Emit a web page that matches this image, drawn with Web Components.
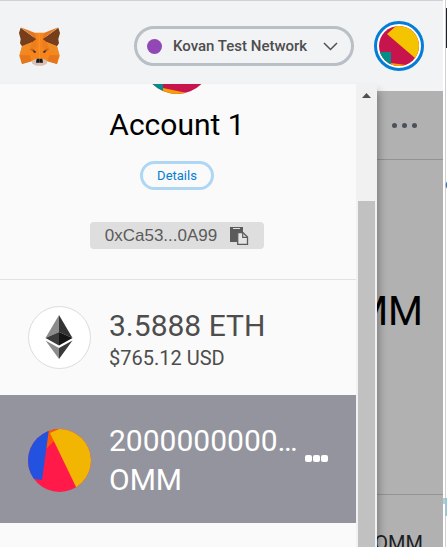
<!DOCTYPE html>
<html lang="en">
<head>
<meta charset="utf-8">
<title>Wallet</title>
<style>
  html, body { height: 100%; margin: 0; }
  body { font-family: Roboto, "Liberation Sans", sans-serif; background: #fff; overflow: hidden; }
</style>
</head>
<body>
<wallet-window>
  <wallet-header slot="header">
    <fox-logo slot="logo"></fox-logo>
    <network-picker slot="network">Kovan Test Network</network-picker>
    <account-button slot="account"></account-button>
  </wallet-header>
  <token-view slot="main">
    <span slot="balance">OMM</span>
    <span slot="activity">OMM</span>
  </token-view>
  <side-drawer slot="drawer">
    <account-summary>
      <span slot="name">Account 1</span>
      <span slot="address">0xCa53...0A99</span>
    </account-summary>
    <asset-row>
      <eth-icon slot="icon"></eth-icon>
      3.5888 ETH
      <span slot="fiat">$765.12 USD</span>
    </asset-row>
    <asset-row selected>
      <token-icon slot="icon"></token-icon>
      2000000000…<br>OMM
    </asset-row>
  </side-drawer>
  <page-edge slot="edge">e</page-edge>
</wallet-window>

<script>
const define = (name, markup) => customElements.define(name, class extends HTMLElement {
  constructor() {
    super();
    const template = document.createElement('template');
    template.innerHTML = markup;
    this.attachShadow({ mode: 'open' }).append(template.content.cloneNode(true));
  }
});

define('wallet-window', `
  <style>
    :host { display: grid; grid-template-columns: minmax(0, 1fr) 4px; height: 100vh; }
    .popup { position: relative; display: flex; flex-direction: column; min-height: 0; overflow: hidden; }
    ::slotted([slot=main]) { flex: 1; }
    ::slotted([slot=drawer]) { position: absolute; top: 84px; bottom: 0; left: 0; right: 66px; }
  </style>
  <div class="popup"><slot name="header"></slot><slot name="main"></slot><slot name="drawer"></slot></div>
  <slot name="edge"></slot>`);

define('wallet-header', `
  <style>
    :host { display: block; }
    header { display: flex; align-items: center; gap: 20px; height: 90px; padding: 0 19px; background: #f2f3f5; border-top: 1px solid #d0d1d5; }
    .space { flex: 1; }
  </style>
  <header><slot name="logo"></slot><div class="space"></div><slot name="network"></slot><slot name="account"></slot></header>`);

define('fox-logo', `
  <style>:host { display: block; } svg { display: block; }</style>
  <svg width="41" height="39" viewBox="57 79 123 117" role="img" aria-label="Wallet logo">
    <defs><g id="half">
      <path fill="#f6851b" d="M104 96H119V176H108L66 190L58 166L66 137L97 124Z"/>
      <path fill="#e8761b" d="M62 80L104 96L109 116Z"/>
      <path fill="#763e1a" d="M62 81L109 116L97 125L66 137L60 128L62 115L57 97Z"/>
      <path fill="#f08a24" d="M66 137L97 124L89 145L58 165Z"/>
      <path fill="#e4761b" d="M60 164H89L96 182L66 190Z"/>
      <path fill="#cd6116" d="M89 145L97 141L109 153L105 158Z"/>
      <path fill="#ee7e1d" d="M109 116L97 125L89 145L110 143Z"/>
      <path fill="#f6851b" d="M89 164L106 158L108 176L96 182Z"/>
      <path fill="#233447" d="M98 149L107 152L106 157L101 155Z"/>
      <path fill="#d7c1b3" d="M95 181L108 174H119V195H109L97 189Z"/>
      <path fill="#161616" d="M110 174H119V186H108Z"/>
    </g></defs>
    <use href="#half"/><use href="#half" transform="translate(237 0) scale(-1 1)"/>
  </svg>`);

define('network-picker', `
  <style>
    :host { display: block; }
    button { display: flex; align-items: center; width: 220px; height: 40px; padding: 0 13px 0 10px; border: 3px solid #b8bfc5; border-radius: 20px; background: none; font: 500 15px/20px Roboto, sans-serif; color: #4d4d4d; }
    i { width: 15px; height: 15px; margin-right: 11px; border-radius: 50%; background: #9148b5; }
    span { flex: 1; text-align: left; white-space: nowrap; }
  </style>
  <button type="button"><i></i><span><slot></slot></span>
    <svg width="15" height="9" viewBox="0 0 15 9" fill="none" stroke="#4d5156" stroke-width="1.5"><path d="M1 1L7.5 7.5L14 1"/></svg>
  </button>`);

define('account-button', `
  <style>
    :host { display: block; }
    button { display: block; width: 50px; height: 50px; padding: 2px; border: 3px solid #037dd6; border-radius: 50%; background: #fff; }
    svg { display: block; border-radius: 50%; }
  </style>
  <button type="button" aria-label="My accounts"><svg width="40" height="40" viewBox="0 0 40 40">
    <path fill="#c8144c" d="M0 0H40V40H0Z"/><path fill="#f5c400" d="M17 0L8 8L36 32L44 26V0Z"/>
    <path fill="#018e8a" d="M0 26H12V40H0Z"/><path fill="#f59f00" d="M12 37L27 39L26 42H12Z"/>
  </svg></button>`);

define('token-view', `
  <style>
    :host { display: flex; flex-direction: column; min-height: 0; overflow: hidden; background: #b1b1b1; color: #000; }
    .menu, .balance, .activity { flex: none; }
    .menu { display: flex; justify-content: flex-end; align-items: center; height: 68px; padding-right: 26px; border-bottom: 1px solid #939393; }
    button { display: flex; gap: 5px; padding: 0; border: 0; background: none; }
    i { width: 5px; height: 5px; border-radius: 50%; background: #4a515b; }
    .balance { display: flex; justify-content: flex-end; align-items: center; height: 335px; box-sizing: border-box; padding: 0 20px 30px 0; border-bottom: 1px solid #939393; font-size: 40px; line-height: 48px; }
    .activity { text-align: right; padding: 36px 20px 0 0; font-size: 20px; line-height: 24px; color: #1b1e22; }
  </style>
  <div class="menu"><button type="button" aria-label="Options"><i></i><i></i><i></i></button></div>
  <div class="balance"><slot name="balance"></slot></div>
  <div class="activity"><slot name="activity"></slot></div>`);

define('side-drawer', `
  <style>
    :host { display: grid; grid-template-columns: minmax(0, 1fr) 21px; background: #fafafa; box-shadow: 2px 7px 8px rgba(0,0,0,.3); }
    .content { overflow: hidden; min-height: 0; }
    .bar { display: flex; flex-direction: column; align-items: center; background: #f1f1f1; padding-top: 9px; }
    .thumb { flex: 1; width: 17px; margin-top: 103px; background: #c1c1c1; }
  </style>
  <div class="content"><slot></slot></div>
  <div class="bar"><svg width="9" height="5" viewBox="0 0 9 5"><path fill="#505050" d="M0 5L4.500 0L9 5Z"/></svg><div class="thumb"></div></div>`);

define('account-summary', `
  <style>
    :host { display: flex; flex-direction: column; align-items: center; padding: 0 2px 30px 0; border-bottom: 1px solid #e2e2e2; }
    .avatar { display: flex; align-items: flex-end; width: 70px; height: 10px; overflow: hidden; }
    .avatar svg { flex: none; border-radius: 50%; }
    .name { margin-top: 11px; font-size: 30px; line-height: 40px; color: #000; }
    .details { height: 29px; width: 74px; margin-top: 16px; padding: 0; border: 3px solid #afd7f3; border-radius: 15px; background: none; font: 400 13px/20px Roboto, sans-serif; color: #037dd6; }
    .address { display: flex; align-items: center; gap: 13px; height: 27px; margin-top: 32px; padding: 0 15px; border: 0; border-radius: 4px; background: #dedede; font: 17px/24px "Liberation Sans", Arial, sans-serif; color: #5b5b5b; }
  </style>
  <div class="avatar"><svg width="70" height="70" viewBox="0 0 70 70">
    <path fill="#c8144c" d="M0 0H70V70H0Z"/><path fill="#f5c400" d="M29 0L14 14L63 56L77 45V0Z"/>
    <path fill="#018e8a" d="M0 46H21V70H0Z"/><path fill="#f59f00" d="M21 64L45 69L44 72H21Z"/>
  </svg></div>
  <div class="name"><slot name="name"></slot></div>
  <button class="details" type="button">Details</button>
  <button class="address" type="button"><slot name="address"></slot>
    <svg width="19" height="18" viewBox="0 0 19 18"><path fill="#5b5b5b" d="M0 0H13V5H7V15H0Z"/><path fill="#dedede" d="M3 1H10V2H3Z"/><path fill="#e4e4e4" stroke="#5b5b5b" stroke-width="1.300" d="M7.700 5.700H13L17.500 10V17.300H7.700Z"/><path fill="none" stroke="#5b5b5b" stroke-width="1.200" d="M12.700 5.700V10.300H17.500"/></svg>
  </button>`);

define('asset-row', `
  <style>
    :host { display: flex; align-items: flex-start; gap: 18px; padding: 26px 28px 23px; color: #4d4d4d; }
    :host([selected]) { align-items: center; padding-bottom: 24px; background: #94949e; color: #fff; }
    .text { flex: 1; min-width: 0; font-size: 30px; line-height: 39px; white-space: nowrap; }
    .fiat { font-size: 20px; line-height: 27px; }
    button { display: none; gap: 1px; padding: 0 0 4px; border: 0; background: none; }
    :host([selected]) button { display: flex; }
    :host([selected]) .fiat { display: none; }
    i { width: 7px; height: 7px; border-radius: 2px; background: #fff; }
  </style>
  <slot name="icon"></slot>
  <div class="text"><slot></slot><div class="fiat"><slot name="fiat"></slot></div></div>
  <button type="button" aria-label="Token options"><i></i><i></i><i></i></button>`);

define('eth-icon', `
  <style>:host { display: block; } svg { display: block; }</style>
  <svg width="63" height="63" viewBox="0 0 63 63"><circle cx="31.500" cy="31.500" r="31" fill="#fff" stroke="#dcdcdc"/>
    <path fill="#8c8c8c" d="M31 9L17.500 32L31 26Z"/><path fill="#343434" d="M31 9L44.500 32L31 26Z"/>
    <path fill="#3c3c3b" d="M31 26L17.500 32L31 39.500Z"/><path fill="#141414" d="M31 26L44.500 32L31 39.500Z"/>
    <path fill="#8c8c8c" d="M17.500 34.500L31 42V53Z"/><path fill="#393939" d="M44.500 34.500L31 42V53Z"/>
  </svg>`);

define('token-icon', `
  <style>:host { display: block; } svg { display: block; border-radius: 50%; }</style>
  <svg width="63" height="63" viewBox="0 0 63 63"><path fill="#ff1a49" d="M0 0H63V63H0Z"/>
    <path fill="#fb5a09" d="M20 0H34L26 12L18 20Z"/><path fill="#2352e1" d="M21 0L14 51L0 49V0Z"/>
    <path fill="#f2b602" d="M22 4L36 -2H63V60H49Z"/>
  </svg>`);

define('page-edge', `
  <style>
    :host { display: grid; grid-template-columns: 2px 1px 1px; grid-template-rows: 8px 40px 128px 16px 306px 18px 1fr; background: #fff; overflow: hidden; color: #0a7bc4; font-size: 14px; line-height: 16px; }
    .line { grid-area: 1 / 2 / -1 / 3; background: #d0d0d0; }
    .dark { grid-area: 2 / 3; background: #1c1f2b; }
    .link { grid-area: 4 / 2 / 5 / 4; width: 2px; overflow: hidden; }
    .band { grid-area: 6 / 1 / 7 / 4; display: flex; background: #9fc5cf; }
    .band::before { content: ""; width: 2px; background: linear-gradient(#a9d3df 6px, #fff 6px); }
  </style>
  <div class="line"></div><div class="dark"></div><div class="link"><slot></slot></div><div class="band"></div>`);
</script>
</body>
</html>
